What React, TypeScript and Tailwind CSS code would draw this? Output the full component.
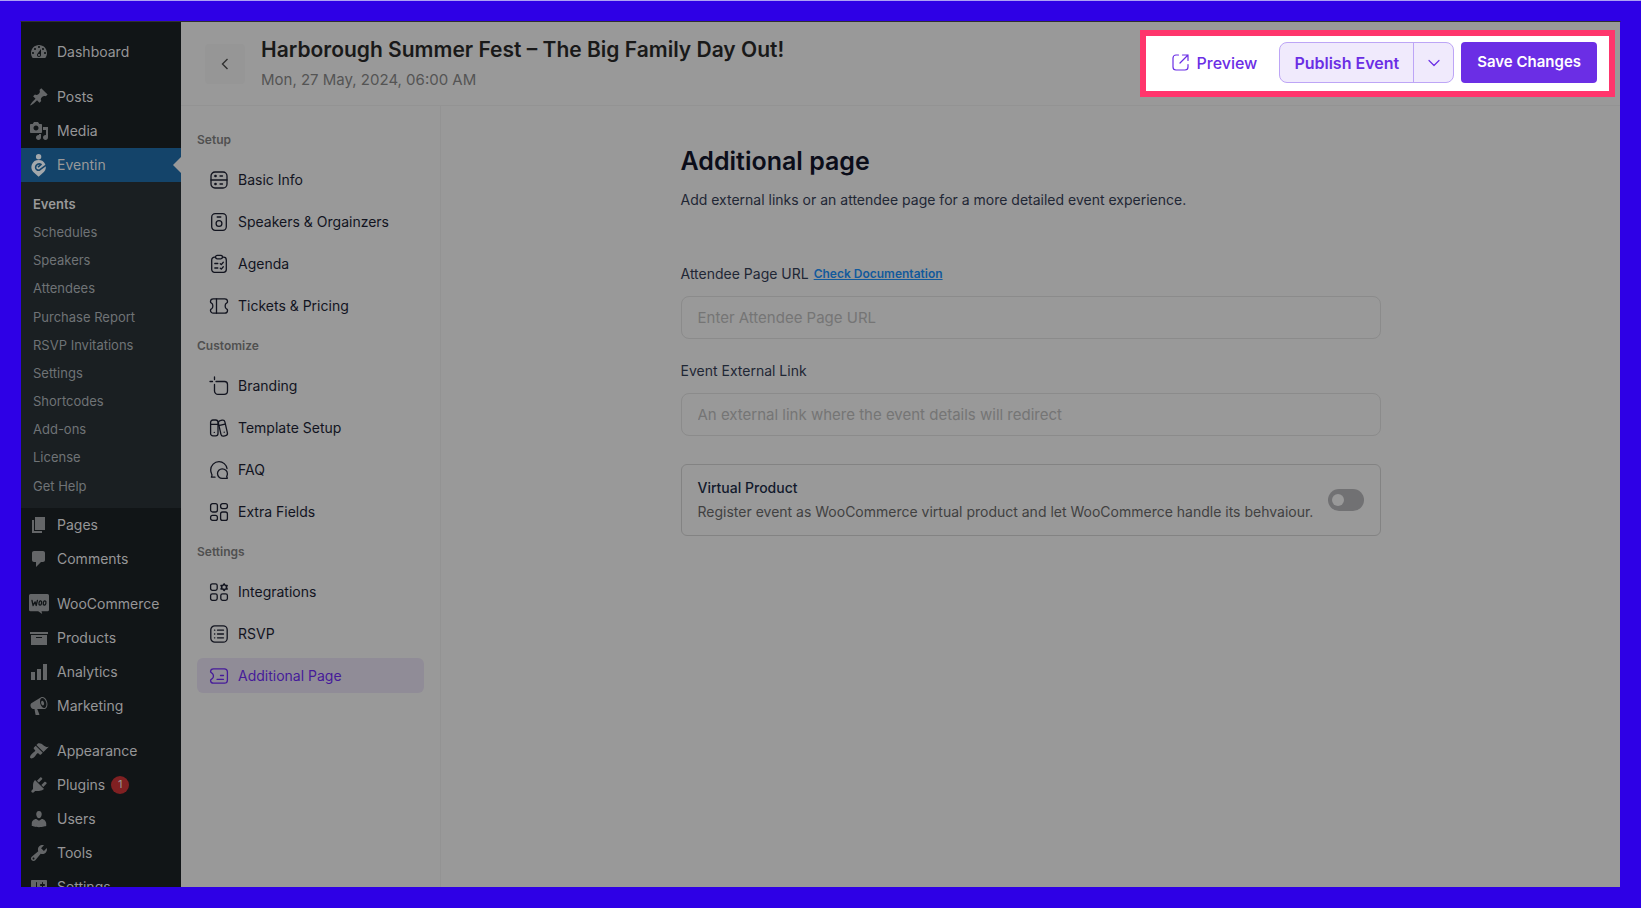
import type { ReactNode } from "react";

type MenuEntry = { label: string; icon: ReactNode; active?: boolean; badge?: string; spaced?: boolean };

function Dashicon({ d }: { d: string }) {
  return (
    <svg viewBox="0 0 20 20" className="size-5 shrink-0" fill="currentColor" fillRule="evenodd" aria-hidden="true">
      <path d={d} />
    </svg>
  );
}

const EventinIcon = (
  <svg viewBox="0 0 20 20" className="size-5 shrink-0 overflow-visible text-[#a3a8ac]" fill="none" stroke="currentColor" aria-hidden="true">
    <circle cx="9.6" cy="1.7" r="2.7" fill="currentColor" stroke="none" />
    <path d="M9.6 5a7.200 7.200 0 0 1 5.300 12.100L9.600 21.800l-5.300-4.700A7.200 7.200 0 0 1 9.600 5z" fill="currentColor" stroke="none" />
    <path
      d="M17.200 10.200l-6.200 4.500c-2.100 1.300-4.600-.200-4.400-2.600.200-2.700 3.300-4.100 5.500-2.600l-3.100 2.600"
      stroke="#14446a"
      strokeWidth="1.600"
      strokeLinejoin="round"
    />
  </svg>
);

const WooIcon = (
  <svg viewBox="0 0 20 20" className="size-5 shrink-0 overflow-visible" aria-hidden="true">
    <path fill="currentColor" d="M1.500 0h17A1.500 1.500 0 0 1 20 1.500v14.300a1.500 1.500 0 0 1-1.500 1.500H12.500l.700 2.700-4-2.700H1.500A1.500 1.500 0 0 1 0 15.800V1.500A1.500 1.500 0 0 1 1.500 0z" />
    <g fill="none" stroke="#111517" strokeWidth="1.300" strokeLinecap="round" strokeLinejoin="round">
      <path d="M3 6.500l1.100 5 2-3.600 1.100 3.600 1.200-5.200" />
      <ellipse cx="11.300" cy="9" rx="1.300" ry="2.100" transform="rotate(12 11.300 9)" />
      <ellipse cx="15.600" cy="9" rx="1.300" ry="2.100" transform="rotate(12 15.600 9)" />
    </g>
  </svg>
);

const topMenu: MenuEntry[] = [
  {
    label: "Dashboard",
    icon: <Dashicon d="M3.760 16h12.480c1.100-1.370 1.760-3.110 1.760-5 0-4.420-3.580-8-8-8s-8 3.580-8 8c0 1.890.660 3.630 1.760 5zM10 4c.550 0 1 .450 1 1s-.450 1-1 1-1-.450-1-1 .450-1 1-1zM6 6c.550 0 1 .450 1 1s-.450 1-1 1-1-.450-1-1 .450-1 1-1zm8 0c.550 0 1 .450 1 1s-.450 1-1 1-1-.450-1-1 .450-1 1-1zm-5.370 5.550L12 7v6c0 1.100-.900 2-2 2s-2-.900-2-2c0-.570.240-1.080.630-1.450zM4 10c.550 0 1 .450 1 1s-.450 1-1 1-1-.450-1-1 .450-1 1-1zm12 0c.550 0 1 .450 1 1s-.450 1-1 1-1-.450-1-1 .450-1 1-1zm-5 3c0-.550-.450-1-1-1s-1 .450-1 1 .450 1 1 1 1-.450 1-1z" />,
  },
  {
    label: "Posts",
    spaced: true,
    icon: <Dashicon d="M10.440 3.020l1.820-1.820 6.360 6.350-1.830 1.820c-1.050-.680-2.480-.570-3.410.360l-.750.750c-.920.930-1.040 2.350-.350 3.410l-1.830 1.820-2.410-2.410-2.800 2.790c-.420.420-3.380 2.710-3.800 2.290s1.860-3.390 2.280-3.810l2.790-2.790L4.100 9.360l1.830-1.820c1.050.690 2.480.570 3.400-.360l.750-.750c.930-.920 1.050-2.350.360-3.410z" />,
  },
  {
    label: "Media",
    icon: <Dashicon d="M13 11V4c0-.550-.450-1-1-1h-1.670L9 1H5L3.670 3H2c-.550 0-1 .450-1 1v7c0 .550.450 1 1 1h10c.550 0 1-.450 1-1zM7 4.500c1.380 0 2.500 1.120 2.500 2.500S8.380 9.500 7 9.500 4.500 8.380 4.500 7 5.620 4.500 7 4.500zM14 6h5v10.500c0 1.380-1.120 2.500-2.500 2.500S14 17.880 14 16.500s1.120-2.500 2.500-2.500c.170 0 .340.020.500.050V9h-3V6zm-4 8.050V13h2v3.500c0 1.380-1.120 2.500-2.500 2.500S7 17.880 7 16.500 8.120 14 9.500 14c.170 0 .340.020.500.050z" />,
  },
  { label: "Eventin", active: true, icon: EventinIcon },
];

const subMenu = [
  "Events",
  "Schedules",
  "Speakers",
  "Attendees",
  "Purchase Report",
  "RSVP Invitations",
  "Settings",
  "Shortcodes",
  "Add-ons",
  "License",
  "Get Help",
];

const bottomMenu: MenuEntry[] = [
  { label: "Pages", icon: <Dashicon d="M6 15V2h10v13H6zm-1 1h8v2H3V5h2v11z" /> },
  {
    label: "Comments",
    icon: <Dashicon d="M5 2h9c1.100 0 2 .900 2 2v7c0 1.100-.900 2-2 2h-2l-5 5v-5H5c-1.100 0-2-.900-2-2V4c0-1.100.900-2 2-2z" />,
  },
  { label: "WooCommerce", spaced: true, icon: WooIcon },
  { label: "Products", icon: <Dashicon d="M19 4v2H1V4h18zM2 7h16v10H2V7zm11 3V9H7v1h6z" /> },
  { label: "Analytics", icon: <Dashicon d="M18 18V2h-4v16h4zm-6 0V7H8v11h4zm-6 0v-8H2v8h4z" /> },
  {
    label: "Marketing",
    icon: <Dashicon d="M18.150 5.940c.460 1.620.380 3.220-.020 4.480-.420 1.280-1.260 2.180-2.300 2.480-.160.060-.260.060-.400.060-.060.020-.120.020-.180.020-.060.020-.140.020-.220.020h-6.800l2.220 5.500c.020.140-.060.260-.140.340-.080.100-.240.160-.340.160H6.950c-.100 0-.260-.060-.340-.160-.080-.080-.160-.200-.140-.340l-1-5.500H4.250l-.020-.020c-.500.060-1.080-.180-1.540-.620s-.880-1.080-1.060-1.880c-.240-.800-.200-1.560-.020-2.200.180-.620.580-1.080 1.060-1.300l.020-.020 9-5.400c.100-.060.180-.100.240-.160.060-.040.140-.080.240-.120.160-.080.280-.120.500-.180 1.040-.300 2.240.100 3.220.980s1.840 2.240 2.260 3.860zm-2.580 5.980h-.020c.400-.100.740-.340 1.040-.700.580-.700.860-1.760.860-3.040 0-.640-.100-1.300-.280-1.980-.340-1.360-1.020-2.500-1.780-3.240s-1.680-1.100-2.460-.880c-.820.220-1.400.960-1.700 2-.320 1.040-.280 2.360.060 3.720.380 1.360 1 2.500 1.800 3.240.780.740 1.620 1.100 2.480.880zm-2.540-7.080c.220-.040.420-.020.620.040.380.160.760.480 1.020 1s.420 1.200.420 1.780c0 .300-.040.560-.120.800-.180.480-.440.840-.860.940-.340.100-.800-.060-1.140-.400s-.640-.860-.780-1.500c-.180-.620-.120-1.240.020-1.720s.480-.840.820-.940z" />,
  },
  {
    label: "Appearance",
    spaced: true,
    icon: <Dashicon d="M14.480 11.060L7.410 3.990l1.500-1.500c.500-.560 2.300-.470 3.510.320 1.210.800 1.430 1.280 2.910 2.100 1.180.640 2.450 1.260 4.450.850zm-.710.710L6.700 4.700 4.930 6.470c-.390.390-.390 1.020 0 1.410l1.060 1.060c.390.390.390 1.030 0 1.420-.600.600-1.430 1.110-2.210 1.690-.350.260-.700.530-1.010.840C1.430 14.230.400 16.080 1.400 17.070c.990 1 2.840-.030 4.180-1.360.310-.310.580-.660.850-1.020.570-.780 1.080-1.610 1.690-2.210.390-.390 1.020-.390 1.410 0l1.060 1.060c.390.390 1.020.390 1.410 0z" />,
  },
  {
    label: "Plugins",
    badge: "1",
    icon: <Dashicon d="M13.110 4.360L9.870 7.600 8 5.730l3.240-3.240c.350-.340 1.050-.200 1.560.320.520.510.660 1.210.310 1.550zm-8 1.770l.910-1.120 9.010 9.010-1.190.840c-.710.710-2.630 1.160-3.820 1.160H6.140L4.900 17.260c-.590.590-1.540.590-2.120 0-.590-.580-.590-1.530 0-2.120l1.240-1.240v-3.880c0-1.130.400-3.190 1.090-3.890zm7.260 3.970l3.240-3.240c.340-.350 1.040-.210 1.550.310.520.510.660 1.210.310 1.550l-3.240 3.250z" />,
  },
  {
    label: "Users",
    icon: <Dashicon d="M10 9.250c-2.270 0-2.730-3.440-2.730-3.440C7 4.020 7.820 2 9.970 2c2.160 0 2.980 2.020 2.710 3.810 0 0-.410 3.440-2.680 3.440zm0 2.570L12.720 10c2.390 0 4.520 2.330 4.520 4.530v2.490s-3.650 1.130-7.240 1.130c-3.650 0-7.240-1.130-7.240-1.130v-2.490c0-2.250 1.940-4.480 4.470-4.480z" />,
  },
  {
    label: "Tools",
    icon: <Dashicon d="M16.680 9.770c-1.340 1.340-3.300 1.670-4.950.990l-5.410 6.520c-.990.990-2.590.990-3.580 0s-.990-2.590 0-3.570l6.520-5.420c-.680-1.650-.350-3.610.990-4.950 1.280-1.280 3.120-1.620 4.720-1.060l-2.890 2.890 2.820 2.820 2.860-2.870c.530 1.580.180 3.390-1.080 4.650zM3.810 16.210c.400.390 1.040.390 1.430 0 .400-.400.400-1.040 0-1.430-.390-.400-1.030-.400-1.430 0-.390.390-.390 1.030 0 1.430z" />,
  },
  {
    label: "Settings",
    icon: <Dashicon d="M18 16V4c0-.550-.450-1-1-1H3c-.550 0-1 .450-1 1v12c0 .550.450 1 1 1h14c.550 0 1-.450 1-1zM8 11h1c.550 0 1 .450 1 1s-.450 1-1 1H8v1.500c0 .280-.220.500-.500.500s-.500-.220-.500-.500V13H6c-.550 0-1-.450-1-1s.450-1 1-1h1V5.500c0-.280.220-.500.500-.500s.500.220.500.500V11zm5-2h-1c-.550 0-1-.450-1-1s.450-1 1-1h1V5.500c0-.280.220-.500.500-.500s.500.220.500.500V7h1c.550 0 1 .450 1 1s-.450 1-1 1h-1v5.500c0 .280-.220.500-.500.500s-.500-.220-.500-.500V9z" />,
  },
];

function MenuItem({ item }: { item: MenuEntry }) {
  return (
    <li className={item.spaced ? "mt-[11px]" : ""}>
      <a
        href="#"
        className={
          item.active
            ? "relative flex h-[34px] items-center gap-2 bg-[#14446a] pl-2 text-[#999999]"
            : "flex h-[34px] items-center gap-2 pl-2 text-[#646668]"
        }
      >
        {item.icon}
        <span className={item.active ? "text-[#999999]" : "text-[#969697]"}>{item.label}</span>
        {item.badge && (
          <span className="-ml-0.5 flex size-[18px] items-center justify-center rounded-full bg-[#802022] text-[11px] text-[#999999]">
            {item.badge}
          </span>
        )}
        {item.active && (
          <span className="absolute top-[9px] right-0 border-y-8 border-r-8 border-y-transparent border-r-[#999999]" />
        )}
      </a>
    </li>
  );
}

function AdminSidebar() {
  return (
    <nav aria-label="Admin menu" className="w-40 shrink-0 overflow-hidden bg-[#111517] pt-[13px] text-sm">
      <ul>
        {topMenu.map((item) => (
          <MenuItem key={item.label} item={item} />
        ))}
      </ul>
      <ul className="grid min-h-[326px] auto-rows-fr bg-[#1a1f22] py-2 text-[13px]">
        {subMenu.map((label, i) => (
          <li key={label} className="flex items-center">
            <a href="#" className={i === 0 ? "px-3 font-semibold text-[#999999]" : "px-3 text-[#6f7376]"}>
              {label}
            </a>
          </li>
        ))}
      </ul>
      <ul>
        {bottomMenu.map((item) => (
          <MenuItem key={item.label} item={item} />
        ))}
      </ul>
    </nav>
  );
}

function LineIcon({ children }: { children: ReactNode }) {
  return (
    <svg
      viewBox="0 0 18 18"
      className="size-[18px] shrink-0 overflow-visible"
      fill="none"
      stroke="currentColor"
      strokeWidth="1.300"
      strokeLinecap="round"
      strokeLinejoin="round"
      aria-hidden="true"
    >
      {children}
    </svg>
  );
}

const navSections: { title: string; items: { label: string; icon: ReactNode; active?: boolean }[] }[] = [
  {
    title: "Setup",
    items: [
      {
        label: "Basic Info",
        icon: (
          <>
            <rect x="1" y="1" width="16" height="16" rx="4" />
            <path d="M1 9h16M10 5h2.500M10 13h2.500" />
            <circle cx="5.500" cy="5" r=".7" fill="currentColor" />
            <circle cx="5.500" cy="13" r=".7" fill="currentColor" />
          </>
        ),
      },
      {
        label: "Speakers & Orgainzers",
        icon: (
          <>
            <rect x="1.700" y=".7" width="14.600" height="16.600" rx="3.500" />
            <circle cx="9" cy="10.500" r="2.900" />
            <path d="M7.200 4h3.600" />
          </>
        ),
      },
      {
        label: "Agenda",
        icon: (
          <>
            <path d="M5.500 2.200H4.500a2.800 2.800 0 0 0-2.800 2.800v9.500a2.800 2.800 0 0 0 2.800 2.800h9a2.800 2.800 0 0 0 2.800-2.800V5a2.800 2.800 0 0 0-2.800-2.800h-1" />
            <rect x="5.500" y=".4" width="7" height="3.400" rx="1.700" />
            <path d="M4.800 8.500h3M4.800 13h3M10.300 8.700l1 .900 2-2.300M10.300 13.200l1 .900 2-2.300" />
          </>
        ),
      },
      {
        label: "Tickets & Pricing",
        icon: (
          <>
            <path d="M3.300 1.800h11.400c1.500 0 2.800 1.200 2.800 2.800v.500c0 .700-.5.900-1 1.100-1.800.800-1.800 4.800 0 5.600.5.200 1 .400 1 1.100v.5c0 1.600-1.300 2.800-2.800 2.800H3.300C1.800 16.200.5 15 .5 13.400v-.5c0-.700.5-.900 1-1.100 1.800-.800 1.800-4.800 0-5.600-.5-.2-1-.4-1-1.100v-.5c0-1.600 1.300-2.800 2.800-2.800z" />
            <path d="M6.500 1.800v14.400" />
          </>
        ),
      },
    ],
  },
  {
    title: "Customize",
    items: [
      {
        label: "Branding",
        icon: (
          <>
            <path d="M4.500 0v2.500M0 4.500h2.500" />
            <path d="M8 4.500h6.500a3 3 0 0 1 3 3v6.500a3.400 3.400 0 0 1-3.400 3.400H8a3.500 3.500 0 0 1-3.500-3.500V7.500M6 4.500h2" />
          </>
        ),
      },
      {
        label: "Template Setup",
        icon: (
          <>
            <rect x=".6" y="1" width="7.400" height="15.800" rx="2.300" />
            <rect x="9.600" y="1.200" width="6.600" height="15.800" rx="2.300" transform="rotate(-13 13 9)" />
            <path d="M.6 5.300h7.400M8.600 6.600l6.400-1.500M4.300 13.300v.1M14.200 13.200v.1" />
          </>
        ),
      },
      {
        label: "FAQ",
        icon: (
          <>
            <path d="M17 7.500A8.100 8.100 0 0 0 9 .7 8.300 8.300 0 0 0 .7 9c0 1.500.4 2.800 1 4 .4.700.3 1.200.1 2l-.4 1.200H5" />
            <path d="M12.200 7.900a4.700 4.700 0 1 0 0 9.400h5.100l-.6-2c.5-.8.700-1.600.7-2.500 0-2.700-2.300-4.900-5.200-4.900z" />
          </>
        ),
      },
      {
        label: "Extra Fields",
        icon: (
          <>
            <rect x=".6" y=".6" width="6.800" height="8.400" rx="2" />
            <rect x="10.600" y=".6" width="6.800" height="5" rx="2" />
            <rect x=".6" y="12.400" width="6.800" height="5" rx="2" />
            <rect x="10.600" y="9" width="6.800" height="8.400" rx="2" />
          </>
        ),
      },
    ],
  },
  {
    title: "Settings",
    items: [
      {
        label: "Integrations",
        icon: (
          <>
            <rect x=".6" y=".8" width="6.600" height="6.600" rx="1.800" />
            <rect x=".6" y="10.800" width="6.600" height="6.600" rx="1.800" />
            <rect x="10.800" y="10.800" width="6.600" height="6.600" rx="1.800" />
            <path strokeWidth="1.500" d="M14.100 .9l1.100 1.500 2 0-.9 1.800.9 1.800-2 0-1.100 1.500-1.100-1.500-2 0 .9-1.800-.9-1.800 2 0z" />
          </>
        ),
      },
      {
        label: "RSVP",
        icon: (
          <>
            <rect x=".8" y=".8" width="16.400" height="16.400" rx="4" />
            <path d="M7.500 5.200h6M7.500 9h6M7.500 12.800h6M4.500 5.200h.3M4.500 9h.3M4.500 12.800h.3" />
          </>
        ),
      },
      {
        label: "Additional Page",
        active: true,
        icon: (
          <>
            <path d="M3.500 1.800h10.800c2 0 3.100 1.300 3.100 3.200v8c0 1.900-1.200 3.200-3.100 3.200H3.500C1.800 16.200.6 15 .6 13.400v-.5l2-1.700c1.100-1 1.100-3.400 0-4.400l-2-1.700v-.5c0-1.600 1.200-2.800 2.900-2.800z" />
            <path d="M10.500 8.500h3M7 12.300h6.500" />
          </>
        ),
      },
    ],
  },
];

function EventNav() {
  return (
    <nav aria-label="Event sections" className="w-[260px] shrink-0 border-r border-[#939393] px-4 pt-[26px]">
      {navSections.map((section) => (
        <section key={section.title} className="mb-[15px]">
          <h2 className="mb-[14px] text-xs leading-4 font-semibold text-[#505050]">{section.title}</h2>
          <ul className="flex flex-col gap-[7px]">
            {section.items.map((item) => (
              <li key={item.label}>
                <a
                  href="#"
                  className={
                    item.active
                      ? "flex h-[35px] items-center gap-[10px] rounded-md bg-[#908c97] px-[13px] text-sm text-[#461b9a]"
                      : "flex h-[35px] items-center gap-[10px] rounded-md px-[13px] text-sm text-[#12141f]"
                  }
                >
                  <LineIcon>{item.icon}</LineIcon>
                  {item.label}
                </a>
              </li>
            ))}
          </ul>
        </section>
      ))}
    </nav>
  );
}

function EventHeader() {
  return (
    <header className="flex h-[84px] shrink-0 items-center justify-between border-b border-[#939393] pr-[5px] pl-6">
      <div className="flex items-center gap-4">
        <button type="button" aria-label="Back" className="flex size-10 items-center justify-center rounded bg-[#969696] text-[#303030]">
          <svg viewBox="0 0 16 16" className="size-4" fill="none" stroke="currentColor" strokeWidth="1.400" aria-hidden="true">
            <path d="M10.500 3L5.500 8l5 5" />
          </svg>
        </button>
        <div>
          <h1 className="text-[21px] leading-8 font-semibold text-[#191919]">Harborough Summer Fest – The Big Family Day Out!</h1>
          <p className="text-[15px] leading-7 text-[#545454]">Mon, 27 May, 2024, 06:00 AM</p>
        </div>
      </div>
      <div className="flex items-center border-6 border-[#ff356c] bg-white pt-[6px] pr-3 pb-2 pl-[26px] font-semibold">
        <a href="#" className="mr-[22px] flex items-center gap-2 text-base font-medium text-[#6b2ee5]">
          <svg viewBox="0 0 17 17" className="size-[17px]" fill="none" stroke="currentColor" strokeWidth="1.200" strokeLinecap="round" strokeLinejoin="round" aria-hidden="true">
            <path d="M6.500 1H4a3 3 0 0 0-3 3v9a3 3 0 0 0 3 3h9a3 3 0 0 0 3-3v-2.500M10.500 1H16v5.500M16 1L8 9" />
          </svg>
          Preview
        </a>
        <div className="mr-[7px] flex h-[41px] rounded-lg border border-[#bda5f6] bg-[#f0eafc] text-[#6b2ee5]">
          <button type="button" className="px-[14px] text-base">
            Publish Event
          </button>
          <button type="button" aria-label="More publish options" className="flex w-10 items-center justify-center border-l border-[#bda5f6]">
            <svg viewBox="0 0 12 12" className="size-3" fill="none" stroke="currentColor" strokeWidth="1.200" strokeLinecap="round" strokeLinejoin="round" aria-hidden="true">
              <path d="M1 3.500L6 8.500l5-5" />
            </svg>
          </button>
        </div>
        <button type="button" className="h-[41px] rounded bg-[#6b2ee5] px-4 text-[15px] text-white">
          Save Changes
        </button>
      </div>
    </header>
  );
}

function AdditionalPageForm() {
  return (
    <main className="flex min-w-0 flex-1 justify-center px-6 pt-[35px]">
      <form className="w-full max-w-[700px]" onSubmit={(e) => e.preventDefault()}>
        <h2 className="text-[25px] leading-10 font-semibold text-[#0b0d19]">Additional page</h2>
        <p className="mt-[7px] text-sm leading-6 text-[#1f2735]">
          Add external links or an attendee page for a more detailed event experience.
        </p>

        <div className="mt-[50px] flex items-center gap-[5px] text-sm leading-6">
          <label htmlFor="attendee-url" className="text-[#1f2735]">
            Attendee Page URL
          </label>
          <a href="#" className="text-xs font-semibold text-[#125a9c] underline">
            Check Documentation
          </a>
        </div>
        <input
          id="attendee-url"
          type="url"
          placeholder="Enter Attendee Page URL"
          className="mt-[10px] block h-[43px] w-full rounded-lg border border-[#8b8b8b] px-4 text-[15px] placeholder:text-[#757575]"
        />

        <label htmlFor="external-link" className="mt-5 block text-sm leading-6 text-[#1f2735]">
          Event External Link
        </label>
        <input
          id="external-link"
          type="url"
          placeholder="An external link where the event details will redirect"
          className="mt-[10px] block h-[43px] w-full rounded-lg border border-[#8b8b8b] px-4 text-[15px] placeholder:text-[#757575]"
        />

        <div className="mt-7 flex items-center justify-between rounded-md border border-[#838383] px-4 py-[11px]">
          <div>
            <label htmlFor="virtual-product" className="block text-sm leading-6 font-medium text-[#121a2c]">
              Virtual Product
            </label>
            <p className="text-sm leading-6 text-[#414141]">
              Register event as WooCommerce virtual product and let WooCommerce handle its behvaiour.
            </p>
          </div>
          <input
            id="virtual-product"
            type="checkbox"
            role="switch"
            className="flex h-[22px] w-9 shrink-0 appearance-none items-center rounded-full bg-[#717173] px-1 before:size-3 before:rounded-full before:bg-[#999999]"
          />
        </div>
      </form>
    </main>
  );
}

export default function App() {
  return (
    <div className="flex h-screen flex-col border-t border-[#ada0f5] bg-[#2e00e6] px-5 pt-5 pb-[21px] font-['Inter',sans-serif]">
      <div className="flex min-h-0 flex-1 overflow-hidden border-x border-t border-x-[#2e00e6] border-t-[#303030] bg-[#999999]">
        <AdminSidebar />
        <div className="flex min-w-0 flex-1 flex-col">
          <EventHeader />
          <div className="flex min-h-0 flex-1">
            <EventNav />
            <AdditionalPageForm />
          </div>
        </div>
      </div>
    </div>
  );
}
